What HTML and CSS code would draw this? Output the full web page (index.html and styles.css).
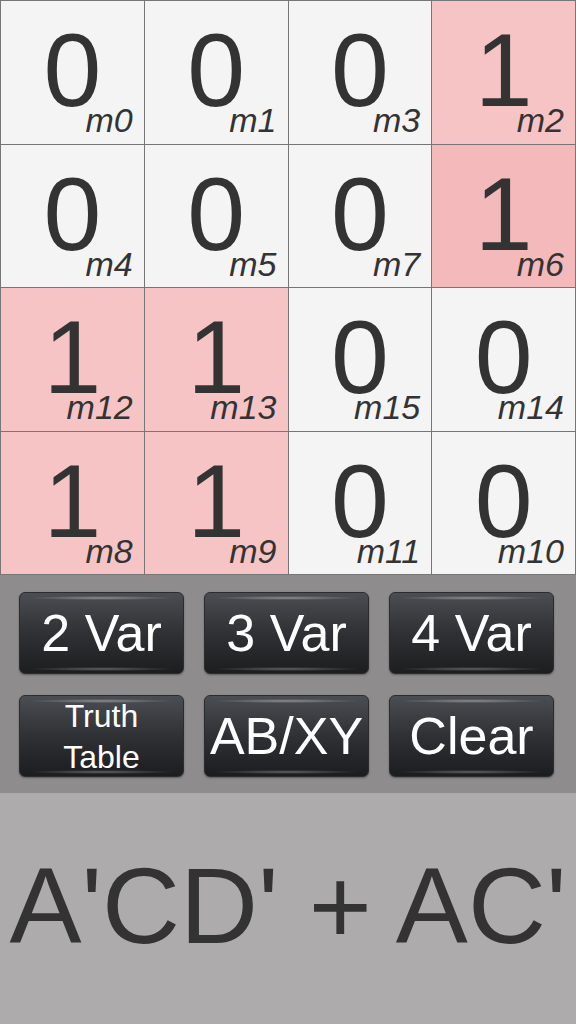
FILE: index.html
```html
<!DOCTYPE html>
<html>
<head>
<meta charset="utf-8">
<link rel="stylesheet" href="styles.css">
</head>
<body>
<div class="app">
  <div class="kmap">
    <div class="cell"><span class="val">0</span><span class="lbl">m0</span></div>
    <div class="cell"><span class="val">0</span><span class="lbl">m1</span></div>
    <div class="cell"><span class="val">0</span><span class="lbl">m3</span></div>
    <div class="cell on"><span class="val">1</span><span class="lbl">m2</span></div>
    <div class="cell"><span class="val">0</span><span class="lbl">m4</span></div>
    <div class="cell"><span class="val">0</span><span class="lbl">m5</span></div>
    <div class="cell"><span class="val">0</span><span class="lbl">m7</span></div>
    <div class="cell on active"><span class="val">1</span><span class="lbl">m6</span></div>
    <div class="cell on"><span class="val">1</span><span class="lbl">m12</span></div>
    <div class="cell on"><span class="val">1</span><span class="lbl">m13</span></div>
    <div class="cell"><span class="val">0</span><span class="lbl">m15</span></div>
    <div class="cell"><span class="val">0</span><span class="lbl">m14</span></div>
    <div class="cell on"><span class="val">1</span><span class="lbl">m8</span></div>
    <div class="cell on"><span class="val">1</span><span class="lbl">m9</span></div>
    <div class="cell"><span class="val">0</span><span class="lbl">m11</span></div>
    <div class="cell"><span class="val">0</span><span class="lbl">m10</span></div>
  </div>
  <div class="panel">
    <button class="btn">2 Var</button>
    <button class="btn">3 Var</button>
    <button class="btn">4 Var</button>
    <button class="btn small">Truth<br>Table</button>
    <button class="btn">AB/XY</button>
    <button class="btn">Clear</button>
  </div>
  <div class="result">A'CD' + AC'</div>
</div>
</body>
</html>
```

FILE: styles.css
```css
html, body {
  margin: 0;
  padding: 0;
}
body {
  width: 576px;
  height: 1024px;
  overflow: hidden;
  font-family: "Liberation Sans", Arial, sans-serif;
}
.app {
  display: flex;
  flex-direction: column;
  height: 1024px;
}
.kmap {
  height: 575px;
  box-sizing: border-box;
  display: grid;
  grid-template-columns: repeat(4, 1fr);
  grid-template-rows: repeat(4, 1fr);
  gap: 1px;
  padding: 1px;
  background: #767676;
}
.cell {
  background: #f4f4f4;
  display: grid;
  color: #333333;
}
.cell.on {
  background: #f6c4c5;
}
.cell.active {
  background: #f4b9ba;
}
.val {
  grid-area: 1 / 1;
  place-self: center;
  font-size: 104px;
  line-height: 0.75;
  margin-bottom: 4px;
}
.lbl {
  grid-area: 1 / 1;
  align-self: end;
  justify-self: end;
  font-size: 34px;
  line-height: 0.75;
  font-style: italic;
  margin: 0 11px 10px 0;
}
.panel {
  height: 218px;
  box-sizing: border-box;
  background: #8e8c8d;
  padding: 17px 21px 0 19px;
  display: grid;
  grid-template-columns: repeat(3, 165px);
  grid-template-rows: 82px 82px;
  column-gap: 20px;
  row-gap: 21px;
}
.btn {
  font-family: "Liberation Sans", Arial, sans-serif;
  font-size: 52px;
  line-height: 1;
  color: #ffffff;
  border: 1px solid #2b2c2e;
  border-radius: 6px;
  padding: 0;
  margin: 0;
  background:
    radial-gradient(ellipse 45% 2px at 50% 5px, rgba(255,255,255,0.38), rgba(255,255,255,0)),
    radial-gradient(ellipse 45% 2px at 50% calc(100% - 4px), rgba(255,255,255,0.3), rgba(255,255,255,0)),
    linear-gradient(#4a4d52, #2f3134 50%, #1c1d1f);
  box-shadow: 0 1px 2px rgba(0,0,0,0.35);
  white-space: nowrap;
}
.btn.small {
  font-size: 32px;
  line-height: 41px;
}
.result {
  flex: 1;
  background: #adabac;
  color: #333333;
  font-size: 108px;
  display: flex;
  align-items: center;
  justify-content: center;
  white-space: nowrap;
  padding-bottom: 6px;
}
```
